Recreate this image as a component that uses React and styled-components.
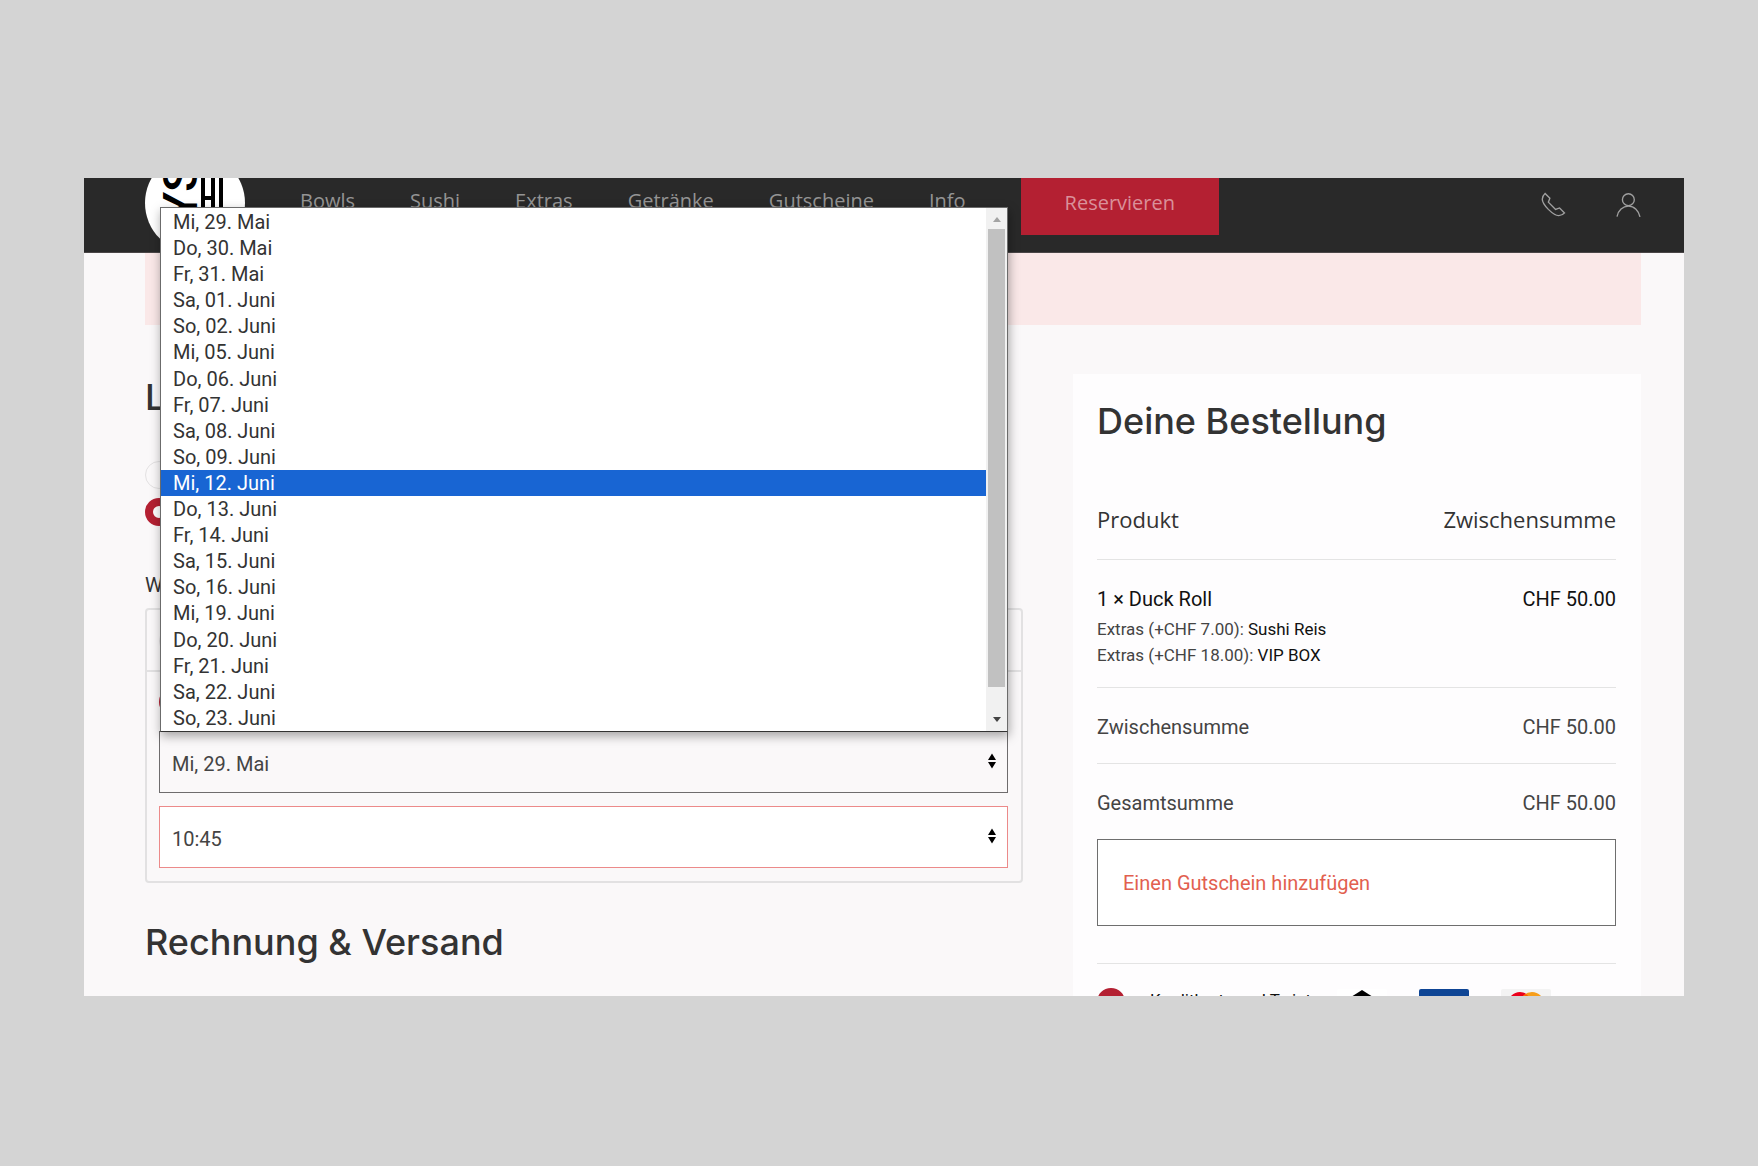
import React from 'react'
import styled, { createGlobalStyle } from 'styled-components'

const navItems = ['Bowls', 'Sushi', 'Extras', 'Getränke', 'Gutscheine', 'Info']

const dates = [
  'Mi, 29. Mai',
  'Do, 30. Mai',
  'Fr, 31. Mai',
  'Sa, 01. Juni',
  'So, 02. Juni',
  'Mi, 05. Juni',
  'Do, 06. Juni',
  'Fr, 07. Juni',
  'Sa, 08. Juni',
  'So, 09. Juni',
  'Mi, 12. Juni',
  'Do, 13. Juni',
  'Fr, 14. Juni',
  'Sa, 15. Juni',
  'So, 16. Juni',
  'Mi, 19. Juni',
  'Do, 20. Juni',
  'Fr, 21. Juni',
  'Sa, 22. Juni',
  'So, 23. Juni',
]

const extras = [
  { label: 'Extras (+CHF 7.00):', value: 'Sushi Reis' },
  { label: 'Extras (+CHF 18.00):', value: 'VIP BOX' },
]

const Logo = () => (
  <LogoLink href="#" aria-label="Startseite">
    <svg width="100" height="100" viewBox="0 0 100 100">
      <circle cx="50" cy="50" r="50" fill="#fff" />
      <text
        transform="translate(52 68) rotate(-90)"
        fontFamily="Roboto, sans-serif"
        fontSize="48"
        fontWeight="500"
      >
        YS
      </text>
      <rect x="56" y="18" width="4" height="64" />
      <rect x="66" y="18" width="4" height="64" />
      <rect x="74" y="18" width="4" height="64" />
      <rect x="58" y="43" width="10" height="4" />
    </svg>
  </LogoLink>
)

const Sorter = () => (
  <SorterIcon width="8" height="16" viewBox="0 0 8 16" aria-hidden="true">
    <path d="M4 0.5L8 7H0Z M0 9H8L4 15.5Z" />
  </SorterIcon>
)

const Header = () => (
  <Bar>
    <Logo />
    <Nav>
      {navItems.map(item => (
        <NavLink href="#" key={item}>{item}</NavLink>
      ))}
    </Nav>
    <Reserve type="button">Reservieren</Reserve>
    <Tools>
      <a href="#" aria-label="Telefon">
        <ToolIcon viewBox="0 0 20 20">
          <path d="M6.189,13.611C8.134,15.525 11.097,18.239 13.867,18.257C16.47,18.275 18.2,16.241 18.2,16.241L14.509,12.551L11.539,13.639L6.189,8.29L7.313,5.355L3.76,1.8C3.76,1.8 1.732,3.537 1.7,6.092C1.667,8.809 4.347,11.738 6.189,13.611" />
        </ToolIcon>
      </a>
      <a href="#" aria-label="Konto">
        <ToolIcon viewBox="0 0 20 20">
          <circle cx="9.9" cy="6.4" r="4.4" />
          <path d="M1.5,19 C2.3,14.5 5.8,11.2 10,11.2 C14.2,11.2 17.7,14.5 18.5,19.2" />
        </ToolIcon>
      </a>
    </Tools>
  </Bar>
)

const DateList = () => (
  <Popup>
    <Options role="listbox" aria-label="Datum">
      {dates.map(date => (
        <Option
          role="option"
          key={date}
          $active={date === 'Mi, 12. Juni'}
          aria-selected={date === 'Mi, 12. Juni'}
        >
          {date}
        </Option>
      ))}
    </Options>
    <Scrollbar aria-hidden="true">
      <svg width="8" height="5" viewBox="0 0 8 5"><path d="M4 0L8 5H0Z" fill="#a3a3a3" /></svg>
      <Track><Thumb /></Track>
      <svg width="8" height="5" viewBox="0 0 8 5"><path d="M0 0H8L4 5Z" fill="#444" /></svg>
    </Scrollbar>
  </Popup>
)

const Delivery = () => (
  <Checkout>
    <Title>Lieferung</Title>
    <Choices>
      <Choice><Radio name="art" aria-label="Lieferung" /></Choice>
      <Choice><Radio name="art" aria-label="Abholung" defaultChecked /></Choice>
    </Choices>
    <Question>Wann?</Question>
    <TimeBox>
      <TimeRow $divider><Radio name="zeit" aria-label="Sofort" /></TimeRow>
      <TimeRow><Radio name="zeit" aria-label="Später" defaultChecked /></TimeRow>
      <Fields>
        <Field>
          <Select aria-label="Datum" defaultValue="Mi, 29. Mai" $open>
            {dates.map(date => <option key={date}>{date}</option>)}
          </Select>
          <Sorter />
          <DateList />
        </Field>
        <Field>
          <Select aria-label="Uhrzeit" defaultValue="10:45">
            <option>10:45</option>
          </Select>
          <Sorter />
        </Field>
      </Fields>
    </TimeBox>
    <Title>Rechnung &amp; Versand</Title>
  </Checkout>
)

const Order = () => (
  <Card>
    <Title>Deine Bestellung</Title>
    <Table>
      <thead>
        <tr>
          <Th scope="col">Produkt</Th>
          <Th scope="col" $right>Zwischensumme</Th>
        </tr>
      </thead>
      <tbody>
        <tr>
          <Td $dark $tight>
            1 × Duck Roll
            <Extras>
              {extras.map(extra => (
                <li key={extra.value}><ExtraLabel>{extra.label}</ExtraLabel> {extra.value}</li>
              ))}
            </Extras>
          </Td>
          <Td $dark $right>CHF 50.00</Td>
        </tr>
        <tr>
          <Td>Zwischensumme</Td>
          <Td $right>CHF 50.00</Td>
        </tr>
        <tr>
          <Td $last>Gesamtsumme</Td>
          <Td $last $right>CHF 50.00</Td>
        </tr>
      </tbody>
    </Table>
    <Coupon><a href="#">Einen Gutschein hinzufügen</a></Coupon>
    <Payment>
      <Radio name="zahlung" id="karte" defaultChecked />
      <PaymentLabel htmlFor="karte">Kreditkarte und Twint</PaymentLabel>
      <Methods>
        <svg width="50" height="32" viewBox="0 0 50 32">
          <rect width="50" height="32" rx="2" fill="#fff" />
          <path d="M25 1L36 8V22L25 29L14 22V8Z" />
        </svg>
        <svg width="50" height="32" viewBox="0 0 50 32">
          <rect width="50" height="32" rx="2" fill="#0e4595" />
        </svg>
        <svg width="50" height="32" viewBox="0 0 50 32">
          <rect width="50" height="32" rx="2" fill="#f3f3f3" />
          <circle cx="19" cy="15" r="12" fill="#eb001b" />
          <circle cx="31" cy="15" r="12" fill="#f79e1b" />
          <path d="M25 5A12 12 0 0 1 25 25A12 12 0 0 1 25 5Z" fill="#ff5f00" />
        </svg>
      </Methods>
    </Payment>
  </Card>
)

const App = () => (
  <Page>
    <GlobalStyle />
    <Screen>
      <Header />
      <Main>
        <Notice role="alert" />
        <Columns>
          <Delivery />
          <Order />
        </Columns>
      </Main>
    </Screen>
  </Page>
)

const GlobalStyle = createGlobalStyle`
  * {
    box-sizing: border-box;
  }
  body {
    margin: 0;
    background: #d4d4d4;
    color: #333;
    font-family: Roboto, sans-serif;
    font-size: 20px;
    line-height: 26px;
  }
  svg {
    display: block;
    flex-shrink: 0;
  }
`;

const Page = styled.div`
  display: flex;
  height: 100vh;
  padding: 178px 74px 170px 84px;
`;
const Screen = styled.div`
  flex: 1;
  min-width: 0;
  overflow: hidden;
  background: #faf8f9;
`;

const Bar = styled.header`
  display: flex;
  align-items: flex-start;
  gap: 55px;
  height: 75px;
  padding: 0 42px 0 61px;
  background: #292929;
  border-bottom: 1px solid #4a4647;
`;
const LogoLink = styled.a`
  margin-top: -25px;
`;
const Nav = styled.nav`
  display: flex;
  gap: 55px;
  padding-top: 8px;
`;
const NavLink = styled.a`
  color: #949494;
  font-family: 'Open Sans', sans-serif;
  line-height: 30px;
  text-decoration: none;
`;
const Reserve = styled.button`
  padding: 10px 44px 17px;
  border: 0;
  background: #b42032;
  color: #da909a;
  font-family: 'Open Sans', sans-serif;
  font-size: 20px;
  line-height: 30px;
`;
const Tools = styled.div`
  display: flex;
  gap: 48px;
  margin-left: auto;
  padding-top: 13px;
`;
const ToolIcon = styled.svg`
  width: 27px;
  height: 27px;
  fill: none;
  stroke: #a0a0a0;
`;

const Main = styled.main`
  padding: 0 43px 0 61px;
`;
const Notice = styled.div`
  height: 72px;
  margin-bottom: 49px;
  background: #fae8e8;
`;
const Columns = styled.div`
  display: grid;
  grid-template-columns: minmax(0, 878fr) minmax(0, 568fr);
  gap: 50px;
`;
const Checkout = styled.section`
  padding-top: 3px;
`;
const Title = styled.h2`
  margin: 0;
  font-family: Inter, sans-serif;
  font-size: 36px;
  font-weight: 500;
  line-height: 40px;
`;

const Choices = styled.div`
  display: grid;
  gap: 9px;
  margin: 44px 0 47px;
`;
const Choice = styled.div`
  display: flex;
`;
const Radio = styled.input.attrs({ type: 'radio' })`
  appearance: none;
  flex-shrink: 0;
  width: 28px;
  height: 28px;
  margin: 0;
  border: 1px solid #e3e1e2;
  border-radius: 50%;
  background: #faf8f9;
  &:checked {
    border: 8px solid #b42032;
    background: #fff;
  }
`;
const Question = styled.p`
  margin: 0 0 11px;
  line-height: 24px;
`;
const TimeBox = styled.div`
  margin-bottom: 39px;
  border: 2px solid #e2e1e2;
  border-radius: 4px;
`;
const TimeRow = styled.div`
  display: flex;
  padding: ${props => (props.$divider ? '17px 12px 15px' : '16px 12px 15px')};
  border-bottom: ${props => (props.$divider ? '2px solid #e2e1e2' : '0')};
`;
const Fields = styled.div`
  display: grid;
  gap: 13px;
  padding: 0 13px 13px 12px;
`;
const Field = styled.div`
  position: relative;
`;
const Select = styled.select`
  appearance: none;
  display: block;
  width: 100%;
  height: 62px;
  padding: 4px 30px 0 12px;
  border: 1px solid ${props => (props.$open ? '#6e6c6d' : '#ec8a8a')};
  border-radius: 0;
  background: ${props => (props.$open ? '#faf8f9' : '#fff')};
  color: #444;
  font: inherit;
`;
const SorterIcon = styled.svg`
  position: absolute;
  top: 22px;
  right: 12px;
  pointer-events: none;
`;

const Popup = styled.div`
  position: absolute;
  bottom: calc(100% - 1px);
  left: 1px;
  right: 0;
  display: flex;
  height: 525px;
  border: 1px solid #6b6b6b;
  border-bottom-color: #333;
  background: #fff;
  box-shadow: 1px 4px 10px rgba(0, 0, 0, 0.35);
`;
const Options = styled.ul`
  display: flex;
  flex: 1;
  flex-direction: column;
  margin: 0;
  padding: 1px 0 0;
  list-style: none;
`;
const Option = styled.li`
  flex: 1;
  padding-left: 12px;
  background: ${props => (props.$active ? '#1865d3' : '#fff')};
  color: ${props => (props.$active ? '#fff' : '#333')};
`;
const Scrollbar = styled.div`
  display: flex;
  flex-direction: column;
  align-items: center;
  width: 21px;
  padding: 9px 0;
  background: #f1f1f1;
`;
const Track = styled.div`
  flex: 1;
  align-self: stretch;
  padding: 7px 2px 30px;
`;
const Thumb = styled.div`
  height: 100%;
  background: #c1c1c1;
`;

const Card = styled.section`
  padding: 27px 25px 26px 24px;
  background: #fefdfe;
`;
const Table = styled.table`
  width: 100%;
  margin-top: 38px;
  border-collapse: collapse;
`;
const Th = styled.th`
  padding: 25px 0;
  border-bottom: 1px solid #e4e4e4;
  font-family: 'Open Sans', sans-serif;
  font-size: 22px;
  font-weight: 400;
  line-height: 30px;
  text-align: ${props => (props.$right ? 'right' : 'left')};
`;
const Td = styled.td`
  padding: 26px 0 ${props => (props.$tight ? '19px' : '23px')};
  border-bottom: ${props => (props.$last ? '0' : '1px solid #e4e4e4')};
  color: ${props => (props.$dark ? '#111' : '#444')};
  text-align: ${props => (props.$right ? 'right' : 'left')};
  vertical-align: top;
`;
const Extras = styled.ul`
  margin: 4px 0 0;
  padding: 0;
  font-size: 17px;
  list-style: none;
`;
const ExtraLabel = styled.span`
  color: #444;
`;
const Coupon = styled.div`
  padding: 30px 25px 29px;
  border: 1px solid #6e6e6e;
  background: #fff;
  a {
    color: #e2604f;
    text-decoration: none;
  }
`;
const Payment = styled.div`
  display: flex;
  align-items: flex-start;
  margin-top: 37px;
  padding-top: 24px;
  border-top: 1px solid #e4e4e4;
`;
const PaymentLabel = styled.label`
  flex: 0 0 212px;
  padding-left: 25px;
  color: #111;
  font-size: 17px;
  line-height: 24px;
  white-space: nowrap;
`;
const Methods = styled.div`
  display: flex;
  gap: 32px;
  padding-top: 1px;
`;

export default App
